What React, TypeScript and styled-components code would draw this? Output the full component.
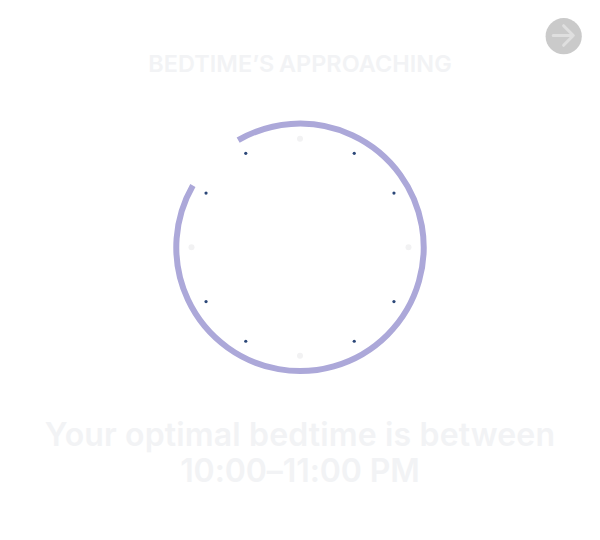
import React from "react";
import styled, { createGlobalStyle } from "styled-components";

const GlobalStyle = createGlobalStyle`
  body { margin: 0; background: #fff; }
`;

const Screen = styled.main`
  box-sizing: border-box;
  position: relative;
  width: 600px;
  height: 540px;
  overflow: hidden;
  display: flex;
  flex-direction: column;
  align-items: center;
  padding-top: 48px;
  background: #fff;
  color: #f2f3f5;
  font-family: Inter, "Liberation Sans", sans-serif;
`;

const NextButton = styled.button`
  position: absolute;
  top: 18px;
  right: 18px;
  width: 37px;
  height: 37px;
  padding: 0;
  border: 0;
  background: none;
`;

const Icon = styled.svg`
  display: block;
`;

const Title = styled.h1`
  margin: 0;
  height: 32px;
  font-size: 23.4px;
  line-height: 32px;
  font-weight: 600;
  letter-spacing: 0.07px;
  word-spacing: -1.4px;
  white-space: nowrap;
`;

const Dial = styled.svg`
  display: block;
  margin-top: 37px;
  flex: none;
`;

const Message = styled.p`
  margin: 40px 0 0;
  display: flex;
  flex-direction: column;
  align-items: center;
  font-size: 32px;
  line-height: 36px;
  font-weight: 600;
`;

const MessageLine = styled.span<{ $spacing: number }>`
  white-space: nowrap;
  letter-spacing: ${(p) => p.$spacing}px;
`;

const CENTER_X = 130;
const CENTER_Y = 130.3;
const RING = 123.7;
const TICKS = 108.5;

const point = (angle: number, radius: number) => {
  const a = (angle * Math.PI) / 180;
  return { x: CENTER_X + radius * Math.sin(a), y: CENTER_Y - radius * Math.cos(a) };
};

const start = point(-30, RING);
const end = point(-60, RING);

export default function App() {
  return (
    <>
      <GlobalStyle />
      <Screen>
        <NextButton aria-label="Next">
          <Icon width="37" height="37" viewBox="0 0 37 37" fill="none">
            <circle cx="18.7" cy="18.2" r="18.1" fill="#cacaca" />
            <path
              d="M8.2 17.5H28M18.6 7.7L28.3 17.5L18.6 27.3"
              stroke="#dfdfdf"
              strokeWidth="3"
              strokeLinecap="round"
              strokeLinejoin="round"
            />
          </Icon>
        </NextButton>
        <Title>BEDTIME’S APPROACHING</Title>
        <Dial width="260" height="260" viewBox="0 0 260 260" fill="none">
          <path
            d={`M${start.x} ${start.y}A${RING} ${RING} 0 1 1 ${end.x} ${end.y}`}
            stroke="#aca8d9"
            strokeWidth="6"
          />
          {Array.from({ length: 12 }, (_, hour) => {
            const { x, y } = point(hour * 30, TICKS);
            const major = hour % 3 === 0;
            return (
              <circle key={hour} cx={x} cy={y} r={major ? 3 : 1.6} fill={major ? "#f2f2f3" : "#2b4778"} />
            );
          })}
        </Dial>
        <Message>
          <MessageLine $spacing={0.15}>Your optimal bedtime is between</MessageLine>
          <MessageLine $spacing={-0.08}>10:00–11:00 PM</MessageLine>
        </Message>
      </Screen>
    </>
  );
}
